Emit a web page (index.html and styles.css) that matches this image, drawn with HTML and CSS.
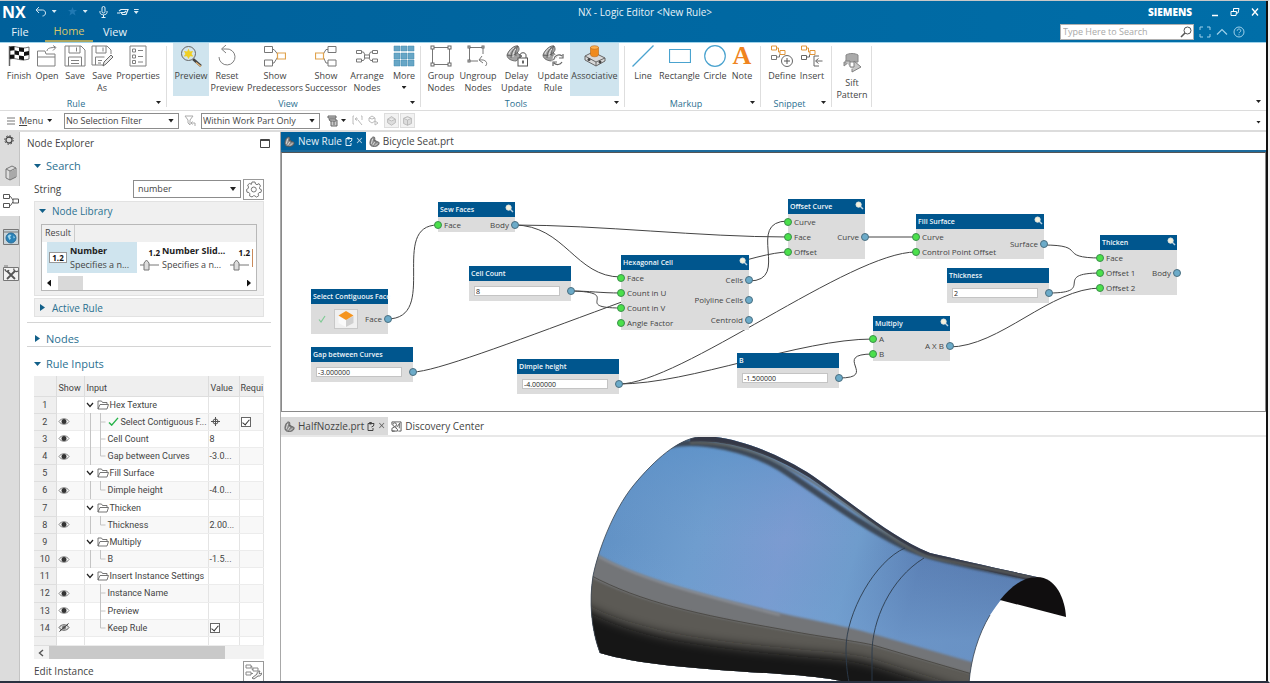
FILE: index.html
```html
<!DOCTYPE html>
<html lang="en">
<head>
<meta charset="utf-8">
<title>NX - Logic Editor</title>
<link rel="stylesheet" href="styles.css">
</head>
<body>
<svg class="defs" aria-hidden="true">
  <defs>
    <symbol id="lens" viewBox="0 0 9 9"><path d="M5 5l3 3" stroke="#b9cfe0" stroke-width="1.4"/><circle cx="3.6" cy="3.6" r="2.6" fill="#f4f1dc" stroke="#e3e6e0"/></symbol>
    <symbol id="eye" viewBox="0 0 12 9"><path d="M1 4.500C3 .8 9 .8 11 4.500C9 8.200 3 8.200 1 4.500z" fill="#fff" stroke="#777" stroke-width=".9"/><circle cx="6" cy="4.500" r="2.500" fill="#333"/></symbol>
    <symbol id="eyeoff" viewBox="0 0 12 9"><path d="M1 4.500C3 .8 9 .8 11 4.500C9 8.200 3 8.200 1 4.500z" fill="#ddd" stroke="#555" stroke-width=".9"/><circle cx="6" cy="4.500" r="2" fill="#777"/><path d="M1.500 8.500L10.500.5" stroke="#333"/></symbol>
    <symbol id="folder" viewBox="0 0 12 10"><path d="M1 9V1h3.500l1 1.500H10v2M1 9l2-4.500h8.500L10 9z" fill="none" stroke="#666" stroke-width=".9"/></symbol>
    <symbol id="chev" viewBox="0 0 8 6"><path d="M1 1l3 3.500L7 1" fill="none" stroke="#222" stroke-width="1.200"/></symbol>
    <symbol id="mid" viewBox="0 0 24 18"><path d="M5.500 0v18M15.500 0v18M15.500 9h5" stroke="#c4c4c4" fill="none"/></symbol>
    <symbol id="end" viewBox="0 0 24 18"><path d="M5.500 0v18M15.500 0v9h5" stroke="#c4c4c4" fill="none"/></symbol>
    <symbol id="mid1" viewBox="0 0 24 18"><path d="M15.500 0v18M15.500 9h5" stroke="#c4c4c4" fill="none"/></symbol>
    <symbol id="end1" viewBox="0 0 24 18"><path d="M15.500 0v9h5" stroke="#c4c4c4" fill="none"/></symbol>
    <symbol id="part" viewBox="0 0 12 12"><path d="M1 8C1 4 3 1 5 1c2 0 1.500 2.500.5 4C7.500 4 8.500 5 7.500 6.500c2-1 4 0 3.500 2-.5 2-3 3-5 3C3.500 11.500 1 11 1 8z" fill="#8a8a8a" stroke="#505050" stroke-width=".8"/><path d="M4 3L2.500 8.500M6.200 6.500L4 10M9 8l-2.500 2.500" stroke="#eee" stroke-width=".9"/></symbol>
    <symbol id="doc" viewBox="0 0 8 9"><path d="M5 1.500H1v7h5V6M2.500 .5h2v1.500h-2zM5 1.500h2l-.5 2.500L4.500 5" fill="none" stroke="currentColor" stroke-width="1"/></symbol>
    <symbol id="fan" viewBox="0 0 22 22"><path d="M1 10C3 4 9 0 12 1c2 3 1 5-1 7l5 3-6 5C6 16 1 14 1 10z" fill="#a2a2a2" stroke="#666" stroke-width=".9"/><path d="M12 1C8 3 5 7 5 13M12 1c-2 3-3 6-2 10M1 10c3 1 7 1 11-3" fill="none" stroke="#555" stroke-width=".8"/><path d="M3 9c1-3 3-5 5-6M7 12c0-4 1-6 3-8" stroke="#e4e4e4" fill="none"/></symbol>
  </defs>
</svg>
<div class="app">
  <header class="titlebar">
    <div class="title-row">
      <div class="quick">
        <b class="brand">NX</b>
        <button aria-label="Undo"><svg width="12" height="11" viewBox="0 0 12 11"><path d="M4 1L1 4l3 3M1 4h6.500c4 0 4 6 0 6" fill="none" stroke="#cfe4f1"/></svg></button><i class="tri"></i>
        <button class="star" aria-label="Favorites"><svg width="9" height="9" viewBox="0 0 9 9"><path d="M4.500 0l1.200 3H9L6.500 5l1 3.500-3-2-3 2 1-3.500L0 3h3.300z" fill="#2079b3"/></svg></button><i class="tri"></i>
        <button class="mic" aria-label="Voice"><svg width="9" height="12" viewBox="0 0 9 12"><rect x="3" y=".5" width="3" height="6.500" rx="1.500" fill="none" stroke="#e4f0f7"/><path d="M1 5v1.500c0 3 7 3 7 0V5M4.500 9v2.500M2.500 11.500h4" fill="none" stroke="#e4f0f7"/></svg></button>
        <button class="swap" aria-label="Touch mode"><svg width="12" height="8" viewBox="0 0 12 8"><path d="M0 5h3M2 3l2-1.500h7L9 6.500H5.500L4 4.500h3.500L9 3" fill="none" stroke="#e4f0f7" stroke-width="1.200"/></svg></button><i class="tri over"></i>
      </div>
      <div class="doc-title">NX - Logic Editor &lt;New Rule&gt;</div>
      <div class="win">
        <b class="siemens">SIEMENS</b>
        <button aria-label="Minimize"><svg width="10" height="10" viewBox="0 0 10 10"><path d="M2 8.500h6" stroke="#fff" stroke-width="1.500"/></svg></button>
        <button aria-label="Restore"><svg width="10" height="10" viewBox="0 0 10 10"><path d="M3.500 4V1.500h5.500L8 6H6.500M1 4.500h5.500L6 8.500H1z" fill="none" stroke="#fff"/></svg></button>
        <button aria-label="Close"><svg width="10" height="10" viewBox="0 0 10 10"><path d="M2 1.500l6 7M8 1.500l-6 7" stroke="#fff" stroke-width="1.300"/></svg></button>
      </div>
    </div>
    <div class="tab-row">
      <nav class="tabs"><button>File</button><button class="active">Home</button><button>View</button></nav>
      <div class="search-area">
        <label class="search"><input type="text" placeholder="Type Here to Search" aria-label="Search"><svg width="12" height="12" viewBox="0 0 12 12"><circle cx="7.500" cy="4.500" r="3.500" fill="none" stroke="#555"/><path d="M5 7L1 11" stroke="#555" stroke-width="1.600"/></svg></label>
        <button aria-label="Full screen"><svg width="12" height="12" viewBox="0 0 12 12"><path d="M1 4V1h3M8 1h3v3M11 8v3H8M4 11H1V8" fill="none" stroke="#9fd0ea"/></svg></button>
        <button aria-label="Collapse ribbon"><svg width="12" height="12" viewBox="0 0 12 12"><path d="M1 8.500l5-5 5 5" fill="none" stroke="#9fd0ea" stroke-width="1.200"/></svg></button>
        <button aria-label="Help"><svg width="12" height="12" viewBox="0 0 12 12"><circle cx="6" cy="6" r="5" fill="none" stroke="#9fd0ea"/><path d="M4.200 4.800c0-2.400 3.600-2.400 3.600 0C7.800 6 6 6 6 7.200M6 8.300v1" fill="none" stroke="#9fd0ea"/></svg></button>
      </div>
    </div>
  </header>

  <section class="ribbon">
    <div class="group g-rule">
      <div class="tools">
        <button class="tool w28"><svg viewBox="0 0 22 22"><path d="M1.500 1v20" stroke="#666" stroke-width="1.500"/><path d="M2 2c6-2 10 3 19 0v12c-9 3-13-2-19 0z" fill="#fff" stroke="#333" stroke-width=".7"/><path d="M2 1.800l4.500-.5v4L2 5.800zM11 2.600l5 .4v4l-5-.6zM6.500 5.300l4.500 1v4L6.500 9.500zM16 7l5-1v4l-5 1zM2 9.800l4.500-.3v4L2 13.800zM11 10.500l5 .7v4l-5-1z" fill="#111"/></svg>Finish</button>
        <button class="tool w28"><svg viewBox="0 0 22 22"><path d="M1.500 21V6H9l1 3h9v12zM1.500 12h17.500M11 6c0-3 4-3.500 8-3.500M17 .5l3 2-3 3" fill="none" stroke="#808080"/></svg>Open</button>
        <button class="tool w28"><svg viewBox="0 0 22 22"><path d="M1 1h16l4 4v16H1zM5 1v7h11V1M4.500 21v-9h13v9M7 15.500h8M7 18.500h8M12.500 2.500v4" fill="none" stroke="#808080"/></svg>Save</button>
        <button class="tool w26"><svg viewBox="0 0 22 22"><path d="M12 20H1V1h15l4 4v4M5 1v7h10V1M4.500 20v-8h9M7 15.500h4M7 18h3M12 2.500v4" fill="none" stroke="#808080"/><path d="M12 21l1-4 7-7 2 2-7 7z" fill="#e8e8e8" stroke="#666"/></svg>Save<br>As</button>
        <button class="tool w46"><svg viewBox="0 0 22 22"><path d="M3 1h16v20H3zM5.500 4h3v3h-3zM5.500 10h3v3h-3zM5.500 15.500h3v3h-3zM11 5.500h5M11 11.500h5M11 17h5" fill="none" stroke="#808080"/></svg>Properties</button>
      </div>
      <div class="group-label">Rule<i class="tri"></i></div>
    </div>
    <div class="group g-view">
      <div class="tools">
        <button class="tool w36 on"><svg viewBox="0 0 22 22"><path d="M13 14l8 7" stroke="#444" stroke-width="2.500"/><path d="M16 17.500l5 4" stroke="#e8b878" stroke-width="1.200"/><circle cx="8.500" cy="8.500" r="7" fill="#d3e4ea" stroke="#666"/><path d="M8.500 3.500l1.300 3L13 6l-1.500 3 2 2.500-3.500-.3L8.500 14 7 11.200l-3.500.3L5.500 9 4 6l3.200.5z" fill="#f0cf22"/></svg>Preview</button>
        <button class="tool w36"><svg viewBox="0 0 22 22"><path d="M6 4h4a8 8 0 1 1-7 8M10 0L5.500 4 10 8" fill="none" stroke="#808080"/></svg>Reset<br>Preview</button>
        <button class="tool w60"><svg viewBox="0 0 22 22"><path d="M0.500 1.500h8v6h-8zM0.500 15h8v6h-8zM8.500 4.500H10l4 5M8.500 18H10l4-6.500" fill="none" stroke="#777"/><path d="M13.500 8h8v6h-8z" fill="#fff" stroke="#e0a24c" stroke-width="1.200"/></svg>Show<br>Predecessors</button>
        <button class="tool w42"><svg viewBox="0 0 22 22"><path d="M13 1.500h8v6h-8zM13 15h8v6h-8zM13 4.500h-2L8 9.500M13 18h-2l-3-6.500" fill="none" stroke="#777"/><path d="M.5 8h8v6h-8z" fill="#fff" stroke="#e0a24c" stroke-width="1.200"/></svg>Show<br>Successor</button>
        <button class="tool w40"><svg viewBox="0 0 22 22"><path d="M.5 5.500h5v3h-5zM16.500 5.500h5v3h-5zM.5 14h5v3h-5zM16.500 14h5v3h-5zM8.500 10h5v3h-5zM5.500 7h2l1.500 3M16.500 7h-2L13 10M5.500 15.500h2L9 13M16.500 15.500h-2L13 13" fill="none" stroke="#777"/></svg>Arrange<br>Nodes</button>
        <button class="tool w34"><svg viewBox="0 0 22 22"><path d="M1 1h6v5H1zM8 1h6v5H8zM15 1h6v5h-6zM1 8h6v6H1zM8 8h6v6H8zM15 8h6v6h-6zM1 15h6v6H1zM8 15h6v6H8zM15 15h6v6h-6z" fill="#67a6c6" stroke="#4288ad" stroke-width=".5"/></svg>More<i class="tri"></i></button>
      </div>
      <div class="group-label">View<i class="tri"></i></div>
    </div>
    <div class="group g-tools">
      <div class="tools">
        <button class="tool w36"><svg viewBox="0 0 22 22"><path d="M2.500 2.500h17v17h-17z" fill="none" stroke="#777"/><g fill="#fff" stroke="#666"><rect x="1" y="1" width="3" height="3"/><rect x="18" y="1" width="3" height="3"/><rect x="1" y="18" width="3" height="3"/><rect x="18" y="18" width="3" height="3"/></g></svg>Group<br>Nodes</button>
        <button class="tool w38"><svg viewBox="0 0 22 22"><path d="M16 9V2.500H2.500V16H11M15 11l-3 4 4 3M12.500 15c6-1 9 3 6 6" fill="none" stroke="#777"/><g fill="#fff" stroke="#666"><rect x="1" y="1" width="2" height="2"/><rect x="15" y="1" width="2" height="2"/><rect x="1" y="15" width="2" height="2"/></g></svg>Ungroup<br>Nodes</button>
        <button class="tool w39"><svg viewBox="0 0 22 22"><use href="#fan"/><path d="M14 13v-3c0-3 6-3 6 0v3" fill="none" stroke="#555"/><rect x="12" y="13" width="9.500" height="8" fill="#fff" stroke="#555"/><path d="M17 15.500v3" stroke="#333" stroke-width="1.500"/></svg>Delay<br>Update</button>
        <button class="tool w34"><svg viewBox="0 0 22 22"><use href="#fan"/><path d="M20 11a5 5 0 0 0-8 3M21 9v4h-4M12 18a5 5 0 0 0 8-1M11 21v-4h4" fill="none" stroke="#fff" stroke-width="3"/><path d="M20 11a5 5 0 0 0-8 3M21 9v4h-4M12 18a5 5 0 0 0 8-1M11 21v-4h4" fill="none" stroke="#666" stroke-width="1.200"/></svg>Update<br>Rule</button>
        <button class="tool w49 on"><svg viewBox="0 0 22 22"><path d="M1 11l8-4 12 6v3l-9 5L1 15z" fill="#d8d8d8" stroke="#666"/><path d="M1 11l11 6 9-4M12 17v4" fill="none" stroke="#666"/><circle cx="5" cy="14.500" r="1.500" fill="#444"/><circle cx="16" cy="17" r="1.500" fill="#444"/><path d="M6.500 2.500v7c0 3 8 3 8 0v-7z" fill="#f08a1d" stroke="#b86510" stroke-width=".6"/><ellipse cx="10.500" cy="2.500" rx="4" ry="1.800" fill="#ffb04d" stroke="#b86510" stroke-width=".6"/></svg>Associative</button>
      </div>
      <div class="group-label">Tools<i class="tri"></i></div>
    </div>
    <div class="group g-markup">
      <div class="tools">
        <button class="tool w24"><svg viewBox="0 0 22 22"><path d="M.5 21.500L21.500.5" stroke="#4aa3cf" stroke-width="1.200"/></svg>Line</button>
        <button class="tool w49"><svg viewBox="0 0 22 22"><path d="M.5 4.500h21v13h-21z" fill="none" stroke="#4aa3cf" stroke-width="1.200"/></svg>Rectangle</button>
        <button class="tool w22"><svg viewBox="0 0 22 22"><circle cx="11" cy="11" r="10.300" fill="none" stroke="#4aa3cf" stroke-width="1.200"/></svg>Circle</button>
        <button class="tool w32"><span class="note-a">A</span>Note</button>
      </div>
      <div class="group-label">Markup<i class="tri"></i></div>
    </div>
    <div class="group g-snippet">
      <div class="tools">
        <button class="tool w30"><svg viewBox="0 0 22 22"><path d="M.5 1h5v4h-5zM9 5.500h5v4H9zM5.500 3h2v4H9" fill="none" stroke="#e0953a"/><path d="M.5 10.500h5v4h-5zM5.500 12h3V9.500" fill="none" stroke="#777"/><circle cx="16" cy="16" r="5.500" fill="#fff" stroke="#666"/><path d="M16 13v6M13 16h6" stroke="#555"/></svg>Define</button>
        <button class="tool w30"><svg viewBox="0 0 22 22"><path d="M.5 1h5v4h-5zM9 5.500h5v4H9zM5.500 3h2v4H9" fill="none" stroke="#e0953a"/><path d="M.5 10.500h5v4h-5zM5.500 12h3V9.500M18 11h-5v10h5M21.500 16H15M17.500 13.500l-3 2.500 3 2.500" fill="none" stroke="#666"/></svg>Insert</button>
      </div>
      <div class="group-label">Snippet<i class="tri"></i></div>
    </div>
    <div class="group g-sift">
      <button class="tool w40"><svg viewBox="0 0 22 22"><path d="M5 3c3-2 9-2 12 0v7H8L3 14v-4h2z" fill="#aaa" stroke="#888"/><path d="M4 9h5v6h4V9l7 6-9 5v-3" fill="#c8c8c8" stroke="#808080"/></svg>Sift<br>Pattern</button>
    </div>
    <i class="tri ribbon-more"></i>
  </section>

  <section class="selbar">
    <button class="menu"><svg width="8" height="8" viewBox="0 0 8 8"><path d="M0 1h8M0 4h8M0 7h8" stroke="#777"/></svg><span><u>M</u>enu</span><i class="tri"></i></button>
    <span class="drop d1"><select aria-label="Selection filter"><option>No Selection Filter</option></select></span>
    <svg width="12" height="12" viewBox="0 0 12 12"><path d="M1 1h8L6 5v5L4 8V5zM11 11V8H7M8.500 6.500L7 8l1.500 1.500" fill="none" stroke="#aaa"/></svg>
    <span class="drop d2"><select aria-label="Selection scope"><option>Within Work Part Only</option></select></span>
    <button class="icon" aria-label="Filter"><svg width="12" height="12" viewBox="0 0 12 12"><path d="M1 1h8v2H1zM2 4h7v2H3zM4 6v5h6V5M6 7h2M6 9h2" fill="#ccc" stroke="#666"/></svg><i class="tri"></i></button>
    <div class="faded">
      <svg width="11" height="11" viewBox="0 0 11 11"><path d="M2 1H1v8h1M9 1h1v4M3 4h3M5 2.500L3 4l2 1.500M6 5l4 5" fill="none" stroke="#bbb"/></svg>
      <svg width="11" height="11" viewBox="0 0 11 11"><path d="M1 3l3-2 3 2v3L4 8 1 6zM7 6l3 2-3 2zM1 3l3 1 3-1" fill="none" stroke="#bbb"/></svg>
      <div class="boxes">
        <svg width="15" height="15" viewBox="0 0 15 15"><path d="M3 6l4.500-3L12 6v4l-4.500 3L3 10zM3 6l4.500 2L12 6" fill="#ddd" stroke="#b5b5b5"/></svg>
        <svg width="15" height="15" viewBox="0 0 15 15"><path d="M3 5l4.500-2L12 5v6l-4.500 2L3 11zM3 5l4.500 2L12 5M7.500 7v6" fill="#ddd" stroke="#b5b5b5"/></svg>
      </div>
    </div>
    <i class="tri bar-more"></i>
  </section>

  <div class="work">
    <nav class="rail">
      <button class="gear" aria-label="Settings"><svg width="10" height="10" viewBox="0 0 10 10"><circle cx="5" cy="5" r="3" fill="none" stroke="#444" stroke-width="1.300"/><circle cx="5" cy="5" r="4.300" fill="none" stroke="#444" stroke-dasharray="1.500 1.870"/></svg></button>
      <button aria-label="Parts"><svg width="14" height="16" viewBox="0 0 14 16"><path d="M2 4l6-3 4 2v9l-6 3-4-2zM2 4l4 2 6-3M6 6v9M8 5.500v8.500M10 4.500V13" fill="#ddd" stroke="#777"/></svg></button>
      <button class="active" aria-label="Node Explorer"><svg width="16" height="16" viewBox="0 0 16 16"><path d="M.5 1.500h6v4h-6zM.5 10.500h6v4h-6zM10 6h5.500v4H10zM6.500 3.500h1L10 7M6.500 12.500h1L10 9" fill="none" stroke="#555"/></svg></button>
      <button aria-label="Web"><svg width="16" height="16" viewBox="0 0 16 16"><path d="M.5.5h15v15H.5z" fill="#c9d4da" stroke="#777"/><path d="M1 3h14" stroke="#777"/><circle cx="8" cy="9" r="5" fill="#2a82b8" stroke="#2a6d98"/><path d="M4.500 7l2-1.500L8.500 6 7 8l1 1.500-1.500 1.500-1-2zM10.500 6.500l1.500 2-1.500 1z" fill="#9fd6ee"/></svg></button>
      <button aria-label="Tools"><svg width="16" height="16" viewBox="0 0 16 16"><path d="M.5 2.500h15v13H.5zM1 1h4" fill="#f2f2f2" stroke="#777"/><path d="M4 6l8 8M12 6l-8 8" stroke="#555" stroke-width="1.800"/><path d="M2 4c0 3 3 3 4 1M11 3.500c-1 2 2 4 4 2.500" fill="none" stroke="#555" stroke-width="1.300"/></svg></button>
    </nav>

    <aside class="panel">
      <div class="panel-head"><span>Node Explorer</span><button aria-label="Maximize"><svg width="10" height="9" viewBox="0 0 10 9"><path d="M.5.5h9v8h-9zM.5 1.500h9" fill="none" stroke="#444"/></svg></button></div>
      <h2><i class="caret open"></i>Search</h2>
      <div class="string-row"><label for="str">String</label><span class="drop d3"><select id="str"><option>number</option></select></span><button class="square" aria-label="Search settings"><svg width="17" height="17" viewBox="0 0 17 17"><path d="M7 1h3l.5 2 1.500.7L14 2.600 15.500 5l-1 1.500.3 1.500 1.700.8-.5 2.500-2 .3-.9 1.300.6 1.900-2.300 1.300-1.600-1.300H8.500L7 16l-2.500-1.200.4-2-1-1.300L2 11.200 1.500 8.500 3.200 7.500l.3-1.500L2.600 4 4.700 2.400l1.700 1z" fill="none" stroke="#777"/><circle cx="8.800" cy="8.500" r="2.500" fill="none" stroke="#777"/></svg></button></div>
      <section class="box lib">
        <h3><i class="caret open"></i>Node Library</h3>
        <div class="results">
          <div class="res-head"><span>Result</span></div>
          <div class="res-list">
            <div class="res on"><span class="num-ico">1.2</span><p><b>Number</b>Specifies a n...</p></div>
            <div class="res"><span class="slide-ico"><b>1.2</b><svg width="19" height="12" viewBox="0 0 19 12"><path d="M0 6h19" stroke="#777"/><path d="M4 11V4l2.500-3L9 4v7z" fill="#ddd" stroke="#777"/></svg></span><p><b>Number Slid...</b>Specifies a n...</p></div>
            <div class="res last"><span class="slide-ico"><b>1.2</b><svg width="19" height="12" viewBox="0 0 19 12"><path d="M0 6h19" stroke="#777"/><path d="M4 11V4l2.500-3L9 4v7z" fill="#ddd" stroke="#777"/></svg></span><i class="sliver"></i></div>
          </div>
          <div class="hbar"><i class="caret back"></i><i class="thumb"></i><i class="caret"></i></div>
        </div>
      </section>
      <section class="box active-rule"><h3><i class="caret"></i>Active Rule</h3></section>
      <h2 class="nodes"><i class="caret"></i>Nodes</h2>
      <h2><i class="caret open"></i>Rule Inputs</h2>
      <div class="grid-wrap">
        <table class="grid">
          <colgroup><col class="c1"><col class="c2"><col class="c3"><col class="c4"><col></colgroup>
          <thead><tr><th></th><th>Show</th><th>Input</th><th>Value</th><th>Requi</th></tr></thead>
          <tbody>
            <tr><th>1</th><td></td><td><div class="cell"><svg class="chev"><use href="#chev"/></svg><svg class="fold"><use href="#folder"/></svg>Hex Texture</div></td><td></td><td></td></tr>
            <tr><th>2</th><td><svg class="eye"><use href="#eye"/></svg></td><td><div class="cell"><svg class="tree"><use href="#mid"/></svg><svg class="ok" viewBox="0 0 12 10"><path d="M1 6l3 3 7-8" fill="none" stroke="#27b34a" stroke-width="1.600"/></svg>Select Contiguous F...</div></td><td><svg class="target" viewBox="0 0 9 9"><circle cx="4.500" cy="4.500" r="2.500" fill="none" stroke="#555"/><path d="M4.500 0v9M0 4.500h9" stroke="#555"/></svg></td><td><input type="checkbox" checked aria-label="Required"></td></tr>
            <tr><th>3</th><td><svg class="eye"><use href="#eye"/></svg></td><td><div class="cell"><svg class="tree"><use href="#mid"/></svg>Cell Count</div></td><td>8</td><td></td></tr>
            <tr><th>4</th><td><svg class="eye"><use href="#eye"/></svg></td><td><div class="cell"><svg class="tree"><use href="#end"/></svg>Gap between Curves</div></td><td>-3.0...</td><td></td></tr>
            <tr><th>5</th><td></td><td><div class="cell"><svg class="chev"><use href="#chev"/></svg><svg class="fold"><use href="#folder"/></svg>Fill Surface</div></td><td></td><td></td></tr>
            <tr><th>6</th><td><svg class="eye"><use href="#eye"/></svg></td><td><div class="cell"><svg class="tree"><use href="#end"/></svg>Dimple height</div></td><td>-4.0...</td><td></td></tr>
            <tr><th>7</th><td></td><td><div class="cell"><svg class="chev"><use href="#chev"/></svg><svg class="fold"><use href="#folder"/></svg>Thicken</div></td><td></td><td></td></tr>
            <tr><th>8</th><td><svg class="eye"><use href="#eye"/></svg></td><td><div class="cell"><svg class="tree"><use href="#end"/></svg>Thickness</div></td><td>2.00...</td><td></td></tr>
            <tr><th>9</th><td></td><td><div class="cell"><svg class="chev"><use href="#chev"/></svg><svg class="fold"><use href="#folder"/></svg>Multiply</div></td><td></td><td></td></tr>
            <tr><th>10</th><td><svg class="eye"><use href="#eye"/></svg></td><td><div class="cell"><svg class="tree"><use href="#end"/></svg>B</div></td><td>-1.5...</td><td></td></tr>
            <tr><th>11</th><td></td><td><div class="cell"><svg class="chev"><use href="#chev"/></svg><svg class="fold"><use href="#folder"/></svg>Insert Instance Settings</div></td><td></td><td></td></tr>
            <tr><th>12</th><td><svg class="eye"><use href="#eye"/></svg></td><td><div class="cell"><svg class="tree"><use href="#mid1"/></svg>Instance Name</div></td><td></td><td></td></tr>
            <tr><th>13</th><td><svg class="eye"><use href="#eye"/></svg></td><td><div class="cell"><svg class="tree"><use href="#mid1"/></svg>Preview</div></td><td></td><td></td></tr>
            <tr><th>14</th><td><svg class="eye"><use href="#eyeoff"/></svg></td><td><div class="cell"><svg class="tree"><use href="#end1"/></svg>Keep Rule</div></td><td><input type="checkbox" checked aria-label="Keep Rule"></td><td></td></tr>
            <tr class="rest"><th></th><td></td><td></td><td></td><td></td></tr>
          </tbody>
        </table>
        <div class="scroll"><svg width="6" height="8" viewBox="0 0 6 8"><path d="M5 1L1.500 4 5 7" fill="none" stroke="#555" stroke-width="1.400"/></svg><i></i></div>
      </div>
      <div class="edit-row"><span>Edit Instance</span><button class="square" aria-label="Edit Instance"><svg width="17" height="17" viewBox="0 0 17 17"><path d="M1 2h5v3H1zM1 9h5v3H1zM8 5h5v3H8zM6 3.500h1v3h1M6 10.500h2" fill="none" stroke="#888"/><path d="M7 15l5-4c0-2 1-3 3-3l-1 2 1 1 2-1c0 2-2 3.500-4 3l-4 3z" fill="#eee" stroke="#777"/></svg></button></div>
    </aside>

    <main class="main">
      <div class="doc-tabs top"><button class="active"><svg class="pi"><use href="#part"/></svg>New Rule<svg class="di"><use href="#doc"/></svg><span class="x">×</span></button><button><svg class="pi"><use href="#part"/></svg>Bicycle Seat.prt</button></div>
      <div class="canvas">
        <svg class="wires" width="984" height="257" viewBox="282 153 984 257" fill="none" stroke="#444" aria-hidden="true">
          <path d="M387 319C440 319 388 225 438 225"/>
          <path d="M514 225C600 225 700 237 788 237"/>
          <path d="M514 225C565 225 575 277 621 277"/>
          <path d="M571 291C590 291 600 293 621 293"/>
          <path d="M571 291C625 292 570 308 621 308"/>
          <path d="M413 372C455 372 730 252 788 252"/>
          <path d="M749 281C792 281 744 221 788 221"/>
          <path d="M865 237H916"/>
          <path d="M619 384C680 384 850 252 916 252"/>
          <path d="M619 384C690 384 800 339 873 339"/>
          <path d="M839 378C880 378 830 354 873 354"/>
          <path d="M1043 245C1090 245 1055 258 1101 258"/>
          <path d="M1049 293C1098 293 1050 273 1101 273"/>
          <path d="M949 347C1000 347 1050 288 1101 288"/>
        </svg>
        <article class="node n-sew"><h4>Sew Faces<svg><use href="#lens"/></svg></h4><div class="ports"><ul class="ins"><li>Face</li></ul><ul class="outs"><li>Body</li></ul></div></article>
        <article class="node n-select"><h4>Select Contiguous Face</h4><div class="ports pick"><svg class="tick" viewBox="0 0 8 8"><path d="M1 4.500L3 7l4-6" fill="none" stroke="#7fcb95" stroke-width="1.200"/></svg><button aria-label="Select face"><svg width="18" height="18" viewBox="0 0 18 18"><path d="M1.500 6L9 10v7l-7.500-4z" fill="#fafafa"/><path d="M16.500 6L9 10v7l7.500-4z" fill="#cfcfcf"/><path d="M9 1l7.500 4.500L9 10 1.500 5.500z" fill="#f5951f"/></svg></button><ul class="outs"><li>Face</li></ul></div></article>
        <article class="node value n-gap"><h4>Gap between Curves</h4><div class="ports"><input type="text" value="-3.000000" aria-label="Gap between Curves"><i class="dot"></i></div></article>
        <article class="node value n-cell"><h4>Cell Count</h4><div class="ports"><input type="text" value="8" aria-label="Cell Count"><i class="dot"></i></div></article>
        <article class="node value n-dimple"><h4>Dimple height</h4><div class="ports"><input type="text" value="-4.000000" aria-label="Dimple height"><i class="dot"></i></div></article>
        <article class="node n-hex"><h4>Hexagonal Cell<svg><use href="#lens"/></svg></h4><div class="ports"><ul class="ins"><li>Face</li><li>Count in U</li><li>Count in V</li><li>Angle Factor</li></ul><ul class="outs"><li>Cells</li><li>Polyline Cells</li><li>Centroid</li></ul></div></article>
        <article class="node n-offset"><h4>Offset Curve<svg><use href="#lens"/></svg></h4><div class="ports"><ul class="ins"><li>Curve</li><li>Face</li><li>Offset</li></ul><ul class="outs"><li>Curve</li></ul></div></article>
        <article class="node n-fill"><h4>Fill Surface<svg><use href="#lens"/></svg></h4><div class="ports"><ul class="ins"><li>Curve</li><li>Control Point Offset</li></ul><ul class="outs"><li>Surface</li></ul></div></article>
        <article class="node value n-thick"><h4>Thickness</h4><div class="ports"><input type="text" value="2" aria-label="Thickness"><i class="dot"></i></div></article>
        <article class="node n-thicken"><h4>Thicken<svg><use href="#lens"/></svg></h4><div class="ports"><ul class="ins"><li>Face</li><li>Offset 1</li><li>Offset 2</li></ul><ul class="outs"><li>Body</li></ul></div></article>
        <article class="node value n-b"><h4>B</h4><div class="ports"><input type="text" value="-1.500000" aria-label="B"><i class="dot"></i></div></article>
        <article class="node n-mult"><h4>Multiply<svg><use href="#lens"/></svg></h4><div class="ports"><ul class="ins"><li>A</li><li>B</li></ul><ul class="outs"><li>A X B</li></ul></div></article>
      </div>
      <div class="doc-tabs low"><button class="active"><svg class="pi"><use href="#part"/></svg>HalfNozzle.prt<svg class="di"><use href="#doc"/></svg><span class="x">×</span></button><button><svg class="pi" viewBox="0 0 12 12"><path d="M1 1h10v10H8M1 11h3M1 1v3" fill="none" stroke="#555"/><circle cx="4" cy="4" r="2" fill="none" stroke="#555"/><path d="M1 11V8l3-1.500L7 9v2zM9 3v5M6 7l4-5" fill="none" stroke="#555"/></svg>Discovery Center</button></div>
      <div class="viewport">
        <svg viewBox="281 436 985 245" preserveAspectRatio="xMinYMin slice" role="img" aria-label="Half nozzle model">
          <defs>
            <clipPath id="shell"><path d="M698 436C678 439 656 457 633 485C613 510 598 550 593 575C589 600 591 628 600 652C640 664 700 668 780 673C812 675 835 678 850 682L969 682C971 658 978 634 990 614C1004 592 1020 577 1037 576C1000 568 960 559 930 552C890 535 860 508 813 475C775 450 725 432 698 436z"/></clipPath>
            <linearGradient id="sky" x1="600" y1="500" x2="1000" y2="620" gradientUnits="userSpaceOnUse"><stop offset="0" stop-color="#5f90c4"/><stop offset=".25" stop-color="#6f9dce"/><stop offset=".45" stop-color="#7c9bd1"/><stop offset=".62" stop-color="#6f9ccc"/><stop offset=".78" stop-color="#5a7eb3"/><stop offset="1" stop-color="#5678ac"/></linearGradient>
            <linearGradient id="pale" x1="0" y1="440" x2="0" y2="640" gradientUnits="userSpaceOnUse"><stop offset="0" stop-color="#5a90c8" stop-opacity=".7"/><stop offset=".5" stop-color="#6c99cc" stop-opacity="0"/><stop offset="1" stop-color="#76a3d4" stop-opacity=".6"/></linearGradient>
            <filter id="b1" x="-10%" y="-30%" width="120%" height="160%"><feGaussianBlur stdDeviation="1"/></filter>
            <filter id="b6" x="-10%" y="-50%" width="120%" height="200%"><feGaussianBlur stdDeviation="6"/></filter>
          </defs>
          <g clip-path="url(#shell)">
            <path d="M580 430H1050V690H580z" fill="url(#sky)"/>
            <path d="M580 430H1050V690H580z" fill="url(#pale)"/>
            <path d="M590 549C630 574 680 588 780 612C820 621 850 626 873 633L975 662V690H580z" fill="#737578" filter="url(#b1)"/>
            <path d="M590 551C635 577 690 591 780 614" fill="none" stroke="#8b8f96" stroke-width="2" filter="url(#b1)"/>
            <path d="M588 575C640 602 700 614 780 629C820 636 850 640 873 645L975 674V690H580z" fill="#5c5a54" filter="url(#b1)"/>
            <path d="M570 598C620 629 680 641 780 650C820 655 850 654 880 664L975 694V730H560z" fill="#191815" filter="url(#b6)"/>
            <path d="M590 574C640 601 700 614 780 628C820 636 850 639 873 644L972 673" fill="none" stroke="#45423e" stroke-width=".8"/>
            <path d="M670 444C700 437 750 449 780 467C820 493 860 524 903 545C935 560 980 566 1030 577" fill="none" stroke="#3c4959" stroke-width="6" filter="url(#b1)"/>
            <path d="M690 436C740 432 790 459 813 473C860 505 890 533 930 550C965 561 1000 567 1037 576" fill="none" stroke="#343847" stroke-width="10"/>
            <path d="M690 442C740 440 775 458 813 481C860 511 890 540 925 555C965 564 1000 569 1037 578" fill="none" stroke="#63655f" stroke-width="2" filter="url(#b1)"/>
          </g>
          <g fill="none" stroke="#2b3b4c" stroke-width=".9"><path d="M905 547C875 560 846 612 846 648C846 660 847 672 849 681M924 557C890 578 872 620 872 652V681"/></g>
          <path d="M698 436C678 439 656 457 633 485C613 510 598 550 593 575C589 600 591 628 600 652M969 682C971 658 978 634 990 614" fill="none" stroke="#3d4650" stroke-width=".8"/>
          <path d="M1000 599C1012 584 1024 576 1037 576C1056 576 1065 598 1066 616z" fill="#100e0f"/>
        </svg>
      </div>
    </main>
  </div>
</div>
</body>
</html>
```
FILE: styles.css
```css
*, ::before, ::after { box-sizing: border-box; }
body { margin: 0; font: 10px/12px "Open Sans", "Noto Sans", sans-serif; color: #444; background: #2a3140; }
button, input, select { font: inherit; color: inherit; border: 0; background: none; padding: 0; margin: 0; }
h2, h3, h4, p, ul { margin: 0; padding: 0; font-size: 10px; font-weight: 400; list-style: none; }
svg { display: block; flex: none; }
.defs { position: absolute; width: 0; height: 0; }
.tri { display: block; flex: none; width: 5px; height: 3px; background: #222; clip-path: polygon(0 0, 100% 0, 50% 100%); }

.app { display: flex; flex-direction: column; height: 100vh; min-height: 560px; border-top: 1px solid #c8c8c8; border-bottom: 2px solid #2a3140; border-right: 2px solid #f0f0f0; background: #fff; box-shadow: inset -2px 0 #111; padding-right: 2px; }

.titlebar { background: linear-gradient(90deg, #00609a, #006ea8); color: #e8f2f8; border-bottom: 1px solid #9ed2ea; }
.title-row { display: grid; grid-template-columns: 1fr auto 1fr; align-items: center; height: 21px; }
.quick { display: flex; align-items: center; padding-left: 2px; }
.quick .tri { background: #d8eaf4; margin-left: 5px; }
.brand { font-size: 16px; line-height: 20px; color: #fff; margin-right: 9px; }
.star { margin-left: 11px; }
.star + .tri { margin-left: 6px; }
.mic { margin-left: 11px; }
.swap { margin-left: 9px; }
.quick .over { height: 5px; clip-path: polygon(0 0, 100% 0, 100% 20%, 0 20%, 0 40%, 100% 40%, 50% 100%, 0 40%); }
.doc-title { padding-left: 24px; }
.win { display: flex; align-items: center; justify-content: flex-end; gap: 10px; padding-right: 6px; }
.siemens { color: #fff; font-size: 10px; font-weight: 800; margin-right: 8px; }
.tab-row { display: flex; justify-content: space-between; height: 20px; }
.tabs { display: flex; font-size: 11px; }
.tabs button { width: 44px; }
.tabs button:first-child { width: 40px; margin-right: 5px; }
.tabs .active { width: 48px; color: #d8c76a; border-bottom: 2px solid #a9a55f; }
.search-area { display: flex; align-items: center; gap: 5px; padding-right: 21px; }
.search { display: flex; align-items: center; width: 134px; height: 16px; padding: 0 1px 0 2px; background: #fff; border: 1px solid #b0b0b0; }
.search input { flex: 1; min-width: 0; font-size: 9px; outline: 0; color: #333; }
.search input::placeholder { color: #a8a8a8; }

.ribbon { display: flex; height: 68px; border-bottom: 1px solid #dcdcdc; font-size: 9px; }
.group { display: flex; flex-direction: column; justify-content: space-between; position: relative; }
.group::after { content: ""; position: absolute; right: 0; top: 3px; bottom: 3px; width: 1px; background: #dedede; }
.tools { display: flex; height: 54px; }
.tool { display: flex; flex-direction: column; align-items: center; justify-content: flex-start; text-align: center; white-space: nowrap; padding-top: 2px; height: 54px; flex: none; }
.tool svg, .note-a { width: 22px; height: 22px; margin-bottom: 3px; }
.tool.on { background: #cfe4ee; height: 53px; }
.tool .tri { margin-top: 4px; }
.note-a { font: 700 26px/22px "Liberation Serif", serif; color: #ef8420; }
.w22 { width: 22px; } .w24 { width: 24px; } .w26 { width: 26px; } .w28 { width: 28px; } .w30 { width: 30px; }
.w32 { width: 32px; } .w34 { width: 34px; } .w36 { width: 36px; } .w38 { width: 38px; } .w39 { width: 39px; }
.w40 { width: 40px; } .w42 { width: 42px; } .w46 { width: 46px; } .w49 { width: 49px; } .w60 { width: 60px; }
.group-label { display: flex; align-items: center; justify-content: center; position: relative; height: 14px; color: #2b7091; }
.group-label .tri { position: absolute; right: 6px; top: 4px; }
.g-rule { padding-left: 5px; width: 167px; }
.g-rule .group-label { padding-right: 20px; }
.g-view { padding-left: 6px; width: 254px; }
.g-view .group-label { padding-right: 18px; }
.g-tools { padding-left: 2px; width: 204px; }
.g-tools .group-label { padding-right: 16px; }
.g-markup { padding-left: 6px; width: 136px; }
.g-markup .group-label { padding-right: 20px; }
.g-snippet { padding-left: 6px; width: 71px; }
.g-snippet .group-label { padding-right: 20px; }
.g-sift { width: 40px; padding-top: 7px; }
.ribbon-more { margin: auto 5px 7px auto; }

.selbar { display: flex; align-items: center; height: 21px; border-bottom: 2px solid #dcdcdc; }
.menu { display: flex; align-items: center; gap: 4px; padding-left: 7px; width: 64px; font-size: 9px; }
.drop { position: relative; display: block; height: 16px; border: 1px solid #8c8c8c; background: #fff; }
.drop::after { content: ""; position: absolute; right: 4px; top: 5px; width: 6px; height: 4px; background: #222; clip-path: polygon(0 0, 100% 0, 50% 100%); pointer-events: none; }
.drop select { appearance: none; display: block; width: 100%; height: 100%; padding-left: 1px; outline: 0; font-size: 9px; }
.d1 { width: 115px; margin-right: 5px; }
.d2 { width: 119px; margin-left: 5px; }
.icon { display: flex; align-items: center; gap: 2px; margin-left: 7px; }
.faded { display: flex; align-items: center; gap: 5px; margin-left: 6px; }
.boxes { display: flex; gap: 1px; }
.boxes svg { border: 1px solid #ddd; background: #f2f2f2; }
.bar-more { margin: 3px 5px 0 auto; }

.work { flex: 1; display: flex; min-height: 0; }
.rail { flex: none; width: 20px; background: #dcdcdc; display: flex; flex-direction: column; border-right: 1px solid #c4c4c4; }
.rail button { display: flex; align-items: center; justify-content: center; width: 20px; height: 30px; margin-bottom: 6px; padding-left: 2px; }
.rail .gear { height: 16px; margin-bottom: 10px; padding: 0 2px 0 0; }
.rail button:nth-child(2) { margin-bottom: -2px; }
.rail .active { background: #fff; }

.panel { flex: none; width: 261px; overflow: hidden; display: flex; flex-direction: column; padding: 0 16px 0 14px; border-right: 1px solid #a8a8a8; }
.panel-head { flex: none; display: flex; justify-content: space-between; align-items: center; height: 22px; margin: 0 -6px 0 -7px; }
.panel h2 { flex: none; display: flex; align-items: center; gap: 5px; height: 24px; font-size: 11px; color: #2b7091; }
.caret { display: block; flex: none; width: 5px; height: 7px; background: #126089; clip-path: polygon(0 0, 100% 50%, 0 100%); margin: 0 1px; }
.caret.open { width: 7px; height: 4px; clip-path: polygon(0 0, 100% 0, 50% 100%); margin: 0; }
.caret.back { clip-path: polygon(100% 0, 0 50%, 100% 100%); }
.string-row { flex: none; display: flex; height: 22px; align-items: center; margin-bottom: 1px; }
.string-row label { flex: 1; }
.d3 { width: 108px; height: 18px; margin-right: 2px; }
.d3 select { padding-left: 4px; font-size: 9px; }
.d3::after { top: 6px; }
.square { display: flex; align-items: center; justify-content: center; width: 21px; height: 21px; border: 1px solid #999; background: #fff; }
.box { flex: none; background: #f0f0f0; border: 1px solid #e2e2e2; padding: 0 6px; }
.box h3 { display: flex; align-items: center; gap: 6px; height: 18px; margin-left: -2px; color: #2b7091; }
.lib { height: 95px; margin-bottom: 2px; }
.lib h3 { margin-bottom: 4px; }
.active-rule { height: 19px; }
.active-rule h3 { height: 17px; }
.results { border: 1px solid #b8b8b8; background: #fff; height: 67px; overflow: hidden; }
.res-head { height: 17px; background: #f0f0f0; display: flex; font-size: 9px; }
.res-head span { line-height: 16px; padding: 0 3px; border-right: 1px solid #ccc; }
.res-list { display: flex; height: 31px; padding-left: 5px; white-space: nowrap; font-size: 9px; }
.res { flex: none; width: 90px; display: flex; align-items: center; gap: 3px; padding-left: 2px; }
.res.on { background: #cfe4ee; margin-right: 2px; }
.res p { line-height: 14px; font-size: 9px; }
.res p b { display: block; color: #222; }
.num-ico { width: 18px; height: 11px; background: #fff; border: 1px solid #999; font: 700 8px/9px "Open Sans", sans-serif; text-align: center; color: #111; }
.res:not(.on) { gap: 2px; padding-left: 1px; }
.slide-ico { position: relative; width: 20px; height: 26px; display: flex; align-items: flex-end; }
.slide-ico b { position: absolute; right: 0; top: 2px; font-size: 8px; line-height: 12px; color: #111; }
.res.last { width: 28px; }
.sliver { width: 1px; height: 18px; background: #c98a5a; }
.hbar { display: flex; align-items: center; height: 14px; margin-top: 3px; padding: 0 4px; }
.hbar .caret { background: #111; width: 4px; }
.hbar .caret:last-child { margin-left: auto; }
.hbar .thumb { width: 25px; height: 14px; background: #d9d9d9; margin-left: 6px; }
.panel .nodes { height: 25px; margin: 5px -7px 5px; padding: 8px 0 0 7px; border-top: 1px solid #d4d4d4; border-bottom: 1px solid #d4d4d4; }

.grid-wrap { flex: none; overflow: hidden; background: #f2f2f2; }
.grid { table-layout: fixed; width: 100%; height: 270px; border-collapse: collapse; font: 9px/12px Roboto, sans-serif; background: #fff; }
.c1 { width: 22px; } .c2 { width: 28px; } .c3 { width: 124px; } .c4 { width: 31px; }
.grid th { font-weight: 400; background: #efefef; border-right: 1px solid #dcdcdc; border-bottom: 1px solid #dedede; padding: 0; }
.grid td { border-right: 1px solid #e4e4e4; border-bottom: 1px solid #ececec; padding: 0 0 0 1px; white-space: nowrap; }
.grid tbody tr:nth-child(even) td { background: #f8f8f8; }
.grid tbody td:nth-child(3) { padding: 0; }
.grid thead th { height: 20px; text-align: left; padding-left: 2px; vertical-align: bottom; line-height: 16px; white-space: nowrap; }
.grid thead th:last-child { padding-left: 1px; border-right: 0; }
.grid .rest th, .grid .rest td { height: 9px; }
.cell { display: flex; align-items: center; height: 16px; }
.chev { width: 8px; height: 6px; margin: 0 3px 0 1px; }
.fold { width: 12px; height: 10px; margin-right: 1px; }
.tree { width: 24px; height: 18px; margin-right: -1px; }
.ok { width: 11px; height: 9px; margin-right: 2px; }
.eye { width: 12px; height: 9px; }
.target { width: 9px; height: 9px; margin-left: 1px; }
.grid input { display: grid; place-items: center; appearance: none; width: 10px; height: 10px; border: 1px solid #666; background: #fff; }
.grid input:checked::after { content: ""; width: 4px; height: 7px; border: solid #333; border-width: 0 1px 1px 0; transform: rotate(40deg); }
.scroll { display: flex; align-items: center; height: 13px; padding-left: 4px; }
.scroll i { width: 176px; height: 13px; background: #c9c9c9; margin-left: 5px; }
.edit-row { flex: none; display: flex; justify-content: space-between; align-items: center; height: 24px; }

.main { flex: 1; min-width: 0; display: flex; flex-direction: column; }
.doc-tabs { flex: none; display: flex; height: 20px; }
.doc-tabs button { display: flex; align-items: center; gap: 2px; padding: 0 4px 0 3px; }
.doc-tabs.top { border-bottom: 2px solid #1d6b9c; }
.doc-tabs.top .active { background: #00609a; color: #e4f0f7; }
.doc-tabs.low { margin-top: 5px; border-bottom: 2px solid #e8e8e8; }
.doc-tabs.low .active { background: #dadada; }
.doc-tabs .active { padding-right: 3px; }
.pi { width: 11px; height: 11px; margin-right: 1px; }
.di { width: 8px; height: 9px; margin-left: 1px; }
.x { font-size: 12px; margin-left: 1px; opacity: .8; }
.canvas { flex: 260 1 0; position: relative; overflow: hidden; border: 1px solid #8a8a8a; border-top-color: #555; min-height: 0; }
.wires { position: absolute; left: 0; top: 0; }
.viewport { flex: 245 1 0; min-height: 0; overflow: hidden; }
.viewport svg { width: 100%; height: 100%; }

.node { position: absolute; width: 77px; font-size: 8px; line-height: 12px; }
.node h4 { height: 15px; padding: 0 1px 0 2px; background: #00568e; color: #f0f6fa; font-size: 7px; font-weight: 600; line-height: 15px; white-space: nowrap; display: flex; justify-content: space-between; }
.node h4 svg { width: 9px; height: 9px; margin: 2px 0 0; }
.ports { display: flex; justify-content: space-between; background: #dcdcdc; min-height: 15px; }
.ins, .outs { display: flex; flex-direction: column; justify-content: space-around; font-size: 8px; }
.ins li, .outs li { display: flex; align-items: center; gap: 2px; height: 15px; white-space: nowrap; }
.ins { margin-left: -4px; }
.outs { margin-right: -4px; align-items: flex-end; }
.ins li::before, .outs li::after, .dot { content: ""; flex: none; width: 8px; height: 8px; border-radius: 50%; background: #4be04b; border: 1px solid #3c8f4c; }
.outs li::after, .dot { background: #6cabc9; border-color: #4b6f80; }
.value { width: 102px; }
.value .ports { height: 20px; align-items: center; padding-left: 5px; }
.value input { width: 86px; height: 10px; background: #fff; border: 1px solid #c4c4c4; font-size: 7px; line-height: 8px; padding-left: 1px; color: #222; }
.dot { margin-right: -4px; }
.pick { height: 30px; align-items: center; padding-left: 7px; }
.pick button { display: grid; place-items: center; width: 24px; height: 20px; background: #f0f0f0; border: 1px solid #c8c8c8; }
.pick .outs { justify-content: center; }
.tick { width: 8px; height: 8px; }
.n-sew { left: 156px; top: 49px; }
.n-select { left: 29px; top: 136px; }
.n-gap { left: 29px; top: 194px; }
.n-cell { left: 187px; top: 113px; }
.n-dimple { left: 235px; top: 206px; }
.n-hex { left: 339px; top: 102px; width: 128px; }
.n-offset { left: 506px; top: 46px; }
.n-fill { left: 634px; top: 61px; width: 128px; }
.n-thick { left: 665px; top: 115px; }
.n-thicken { left: 818px; top: 82px; }
.n-b { left: 455px; top: 200px; }
.n-mult { left: 591px; top: 163px; }
```
